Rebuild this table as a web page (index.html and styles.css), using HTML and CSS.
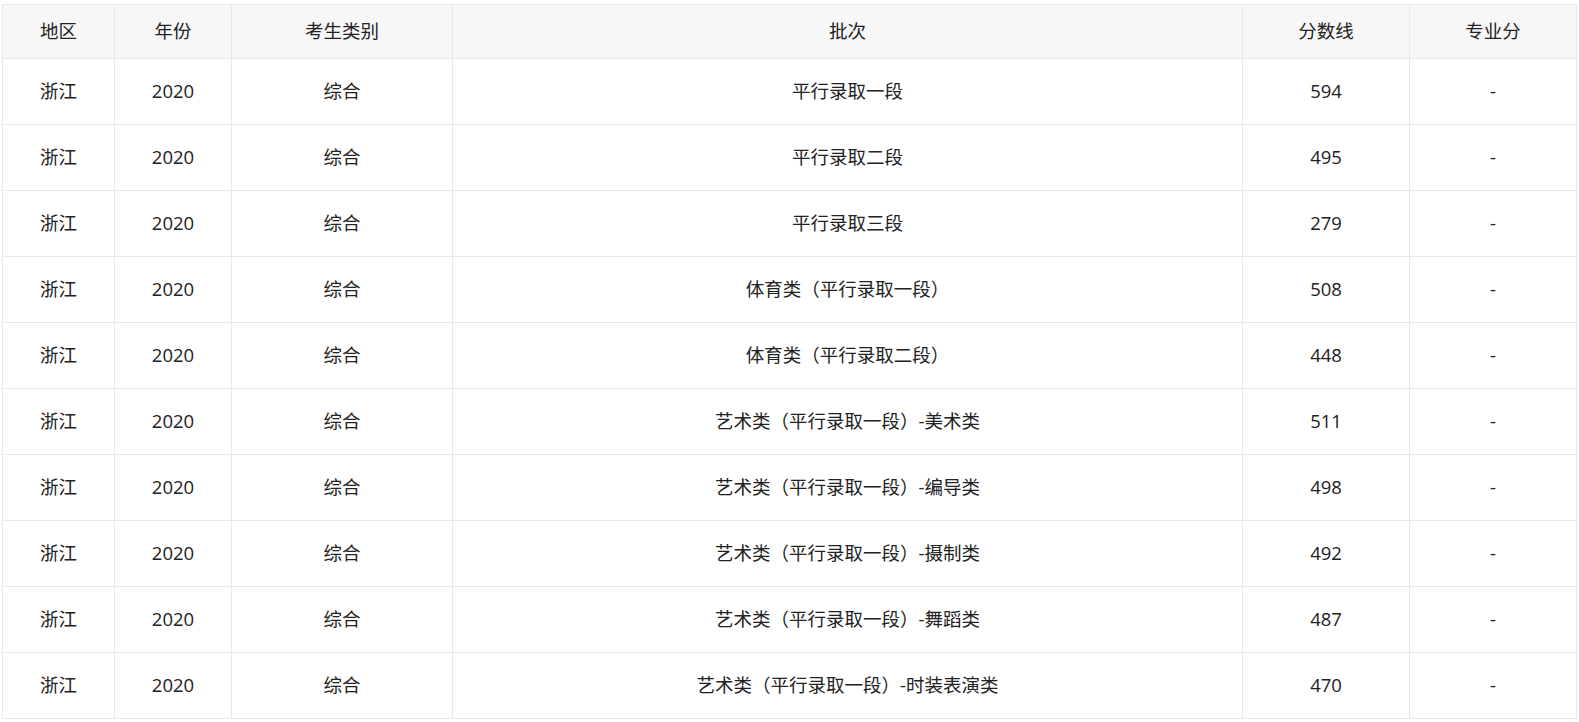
FILE: index.html
```html
<!DOCTYPE html>
<html lang="zh-CN">
<head>
<meta charset="utf-8">
<title>分数线</title>
<link rel="stylesheet" href="styles.css">
</head>
<body>
<div class="wrap">
  <div class="grid" role="table">
    <div class="th">地区</div><div class="th">年份</div><div class="th">考生类别</div><div class="th">批次</div><div class="th">分数线</div><div class="th">专业分</div>
    <div class="td">浙江</div><div class="td">2020</div><div class="td">综合</div><div class="td">平行录取一段</div><div class="td">594</div><div class="td">-</div>
    <div class="td">浙江</div><div class="td">2020</div><div class="td">综合</div><div class="td">平行录取二段</div><div class="td">495</div><div class="td">-</div>
    <div class="td">浙江</div><div class="td">2020</div><div class="td">综合</div><div class="td">平行录取三段</div><div class="td">279</div><div class="td">-</div>
    <div class="td">浙江</div><div class="td">2020</div><div class="td">综合</div><div class="td">体育类（平行录取一段）</div><div class="td">508</div><div class="td">-</div>
    <div class="td">浙江</div><div class="td">2020</div><div class="td">综合</div><div class="td">体育类（平行录取二段）</div><div class="td">448</div><div class="td">-</div>
    <div class="td">浙江</div><div class="td">2020</div><div class="td">综合</div><div class="td">艺术类（平行录取一段）-美术类</div><div class="td">511</div><div class="td">-</div>
    <div class="td">浙江</div><div class="td">2020</div><div class="td">综合</div><div class="td">艺术类（平行录取一段）-编导类</div><div class="td">498</div><div class="td">-</div>
    <div class="td">浙江</div><div class="td">2020</div><div class="td">综合</div><div class="td">艺术类（平行录取一段）-摄制类</div><div class="td">492</div><div class="td">-</div>
    <div class="td">浙江</div><div class="td">2020</div><div class="td">综合</div><div class="td">艺术类（平行录取一段）-舞蹈类</div><div class="td">487</div><div class="td">-</div>
    <div class="td">浙江</div><div class="td">2020</div><div class="td">综合</div><div class="td">艺术类（平行录取一段）-时装表演类</div><div class="td">470</div><div class="td">-</div>
  </div>
</div>
</body>
</html>
```
FILE: styles.css
```css
html, body {
  margin: 0;
  padding: 0;
  background: #fff;
}
.wrap {
  padding: 4px 2px 0 2px;
}
.grid {
  display: grid;
  grid-template-columns: 112px 117px 221px 790px 167px 167px;
  grid-template-rows: 54px repeat(10, 66px);
  width: max-content;
  border-left: 1px solid #e9e9e9;
  border-top: 1px solid #e9e9e9;
  font-family: "Open Sans", "Noto Sans CJK SC", sans-serif;
  font-size: 18.5px;
  color: #222;
}
.th, .td {
  box-sizing: border-box;
  display: flex;
  align-items: center;
  justify-content: center;
  padding-bottom: 3px;
  border-right: 1px solid #e9e9e9;
  border-bottom: 1px solid #e9e9e9;
  white-space: nowrap;
}
.th {
  background: #f7f7f7;
}
```
